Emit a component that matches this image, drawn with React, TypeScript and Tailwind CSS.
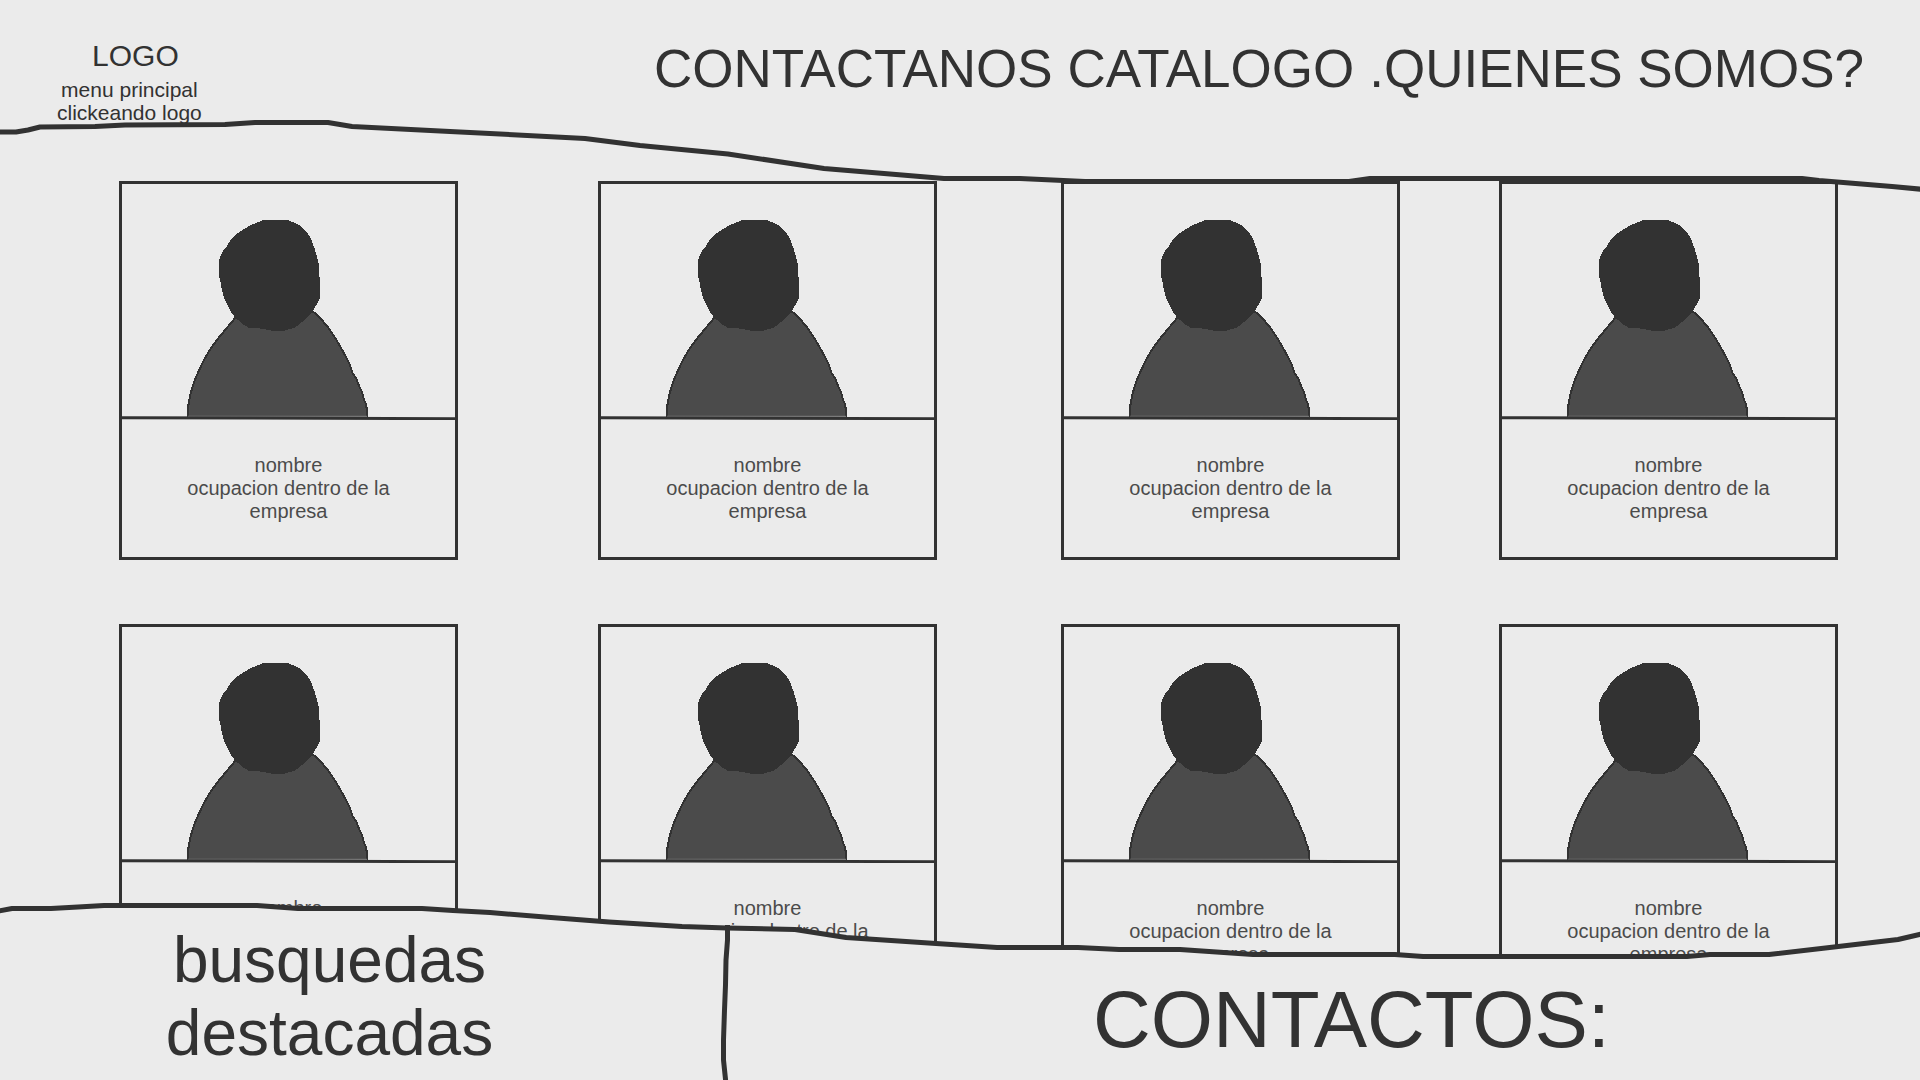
const navLinks = ["CONTACTANOS", "CATALOGO", ".QUIENES SOMOS?"];

const columns = ["col-start-2", "col-start-4", "col-start-6", "col-start-8"];

const people = Array.from({ length: 8 }, (_, id) => ({
  id,
  name: "nombre",
  role: "ocupacion dentro de la empresa",
}));

function Portrait() {
  return (
    <svg viewBox="-144 -48 999 708" className="block h-auto w-full" aria-hidden="true">
      <g shapeRendering="crispEdges">
        <path
          d="M54 654V622L60 588L66 566L74 541L86 514L101 482L119 450L144 416L172 382L198 351L300 330L428 334L447 350L474 382L497 416L520 456L538 491L548 520L559 536L568 560L576 576L582 599L588 612L591 632V654Z"
          fill="#4b4b4b"
          stroke="#323232"
          strokeWidth="6"
        />
        <path
          d="M279 60H354L368 66L380 71L392 78L404 90L414 102L422 114L428 130L434 146L440 168L444 184L447 195V228L450 234V293L444 306L434 324L427 338L402 361L375 383L342 392L310 393L292 389L266 385H239L219 373L196 353L184 338L174 318L162 293L155 266L150 238L147 228V180L155 160L162 147L169 141L180 123L195 105L209 96L225 85L248 73L270 64Z"
          fill="#323232"
        />
      </g>
      <path d="M54 649H591" stroke="#8a8a8a" strokeWidth="3" />
      <path d="M-144 653L855 656" stroke="#323232" strokeWidth="9" />
    </svg>
  );
}

function PersonCard({ name, role, column }: { name: string; role: string; column: string }) {
  return (
    <article className={`${column} border-3 border-[#323232]`}>
      <Portrait />
      <div className="flex h-[137px] flex-col items-center justify-center px-12 text-center text-[20px] leading-[23px] text-[#4b4b4b]">
        <h2>{name}</h2>
        <p>{role}</p>
      </div>
    </article>
  );
}

export default function App() {
  return (
    <div className="flex h-screen flex-col overflow-hidden bg-[#ebebeb] font-['Liberation_Sans',Arial,sans-serif] text-[#323232]">
      <header className="relative z-10 flex h-[181px] shrink-0 items-start justify-between pt-[38px] pr-[56px] pl-[57px]">
        <a href="#inicio" className="text-center">
          <span className="block pl-3 text-[30px] leading-[36px]">LOGO</span>
          <span className="mt-1 block text-[21px] leading-[23px]">
            menu principal
            <br />
            clickeando logo
          </span>
        </a>
        <nav className="flex gap-x-[15px] text-[53px] leading-[61px]">
          {navLinks.map((label) => (
            <a key={label} href="#seccion">
              {label}
            </a>
          ))}
        </nav>
        <svg
          viewBox="0 0 1920 200"
          preserveAspectRatio="none"
          className="pointer-events-none absolute top-0 left-0 h-[200px] w-full"
          aria-hidden="true"
        >
          <path
            d="M-4 132H16L28 130L40 127L95 126.500L125 125L225 124.500L255 122.500H328L352 126.500L450 131.500L585 138.500L640 145.500L728 154L824 168.500L944 178.500H1020L1085 181.500H1349L1370 178.500H1802L1819 180.500L1892 186.500L1924 189.500"
            fill="none"
            stroke="#323232"
            strokeWidth="5"
            strokeLinejoin="round"
          />
        </svg>
      </header>

      <main className="min-h-0 flex-1">
        <div className="grid grid-cols-[119fr_339fr_140fr_339fr_124fr_339fr_99fr_339fr_82fr] gap-y-16">
          {people.map((person, index) => (
            <PersonCard
              key={person.id}
              name={person.name}
              role={person.role}
              column={columns[index % columns.length]}
            />
          ))}
        </div>
      </main>

      <footer className="relative z-10 h-[180px] shrink-0">
        <svg
          viewBox="0 0 1920 180"
          preserveAspectRatio="none"
          className="pointer-events-none absolute inset-0 h-full w-full"
          aria-hidden="true"
        >
          <path
            d="M-4 11.500L12 8.500H51L78 7L104 5.500H257L298 8.500H422L453 10.500L490 12.500L551 17.500L609 22L682 26.500L727 28L795 29.500L846 37.500L936 43.500L997 47.500H1078L1119 49.500H1180L1253 54.500H1395L1423 56.500H1687L1710 54.500H1769L1834 47L1898 39.500L1924 33.500V190H-4Z"
            fill="#ebebeb"
            stroke="#323232"
            strokeWidth="5"
            strokeLinejoin="round"
          />
          <path
            d="M727.500 25V40L726 60L725.500 85L724.500 110L723.500 140V160L726 184"
            fill="none"
            stroke="#323232"
            strokeWidth="5"
            strokeLinejoin="round"
          />
        </svg>
        <div className="relative grid grid-cols-[727fr_1193fr] text-center">
          <h2 className="pt-[24px] pr-[68px] text-[64px] leading-[73px]">
            busquedas
            <br />
            destacadas
          </h2>
          <h2 className="pt-[74px] pl-14 text-[80px] leading-[92px]">CONTACTOS:</h2>
        </div>
      </footer>
    </div>
  );
}
